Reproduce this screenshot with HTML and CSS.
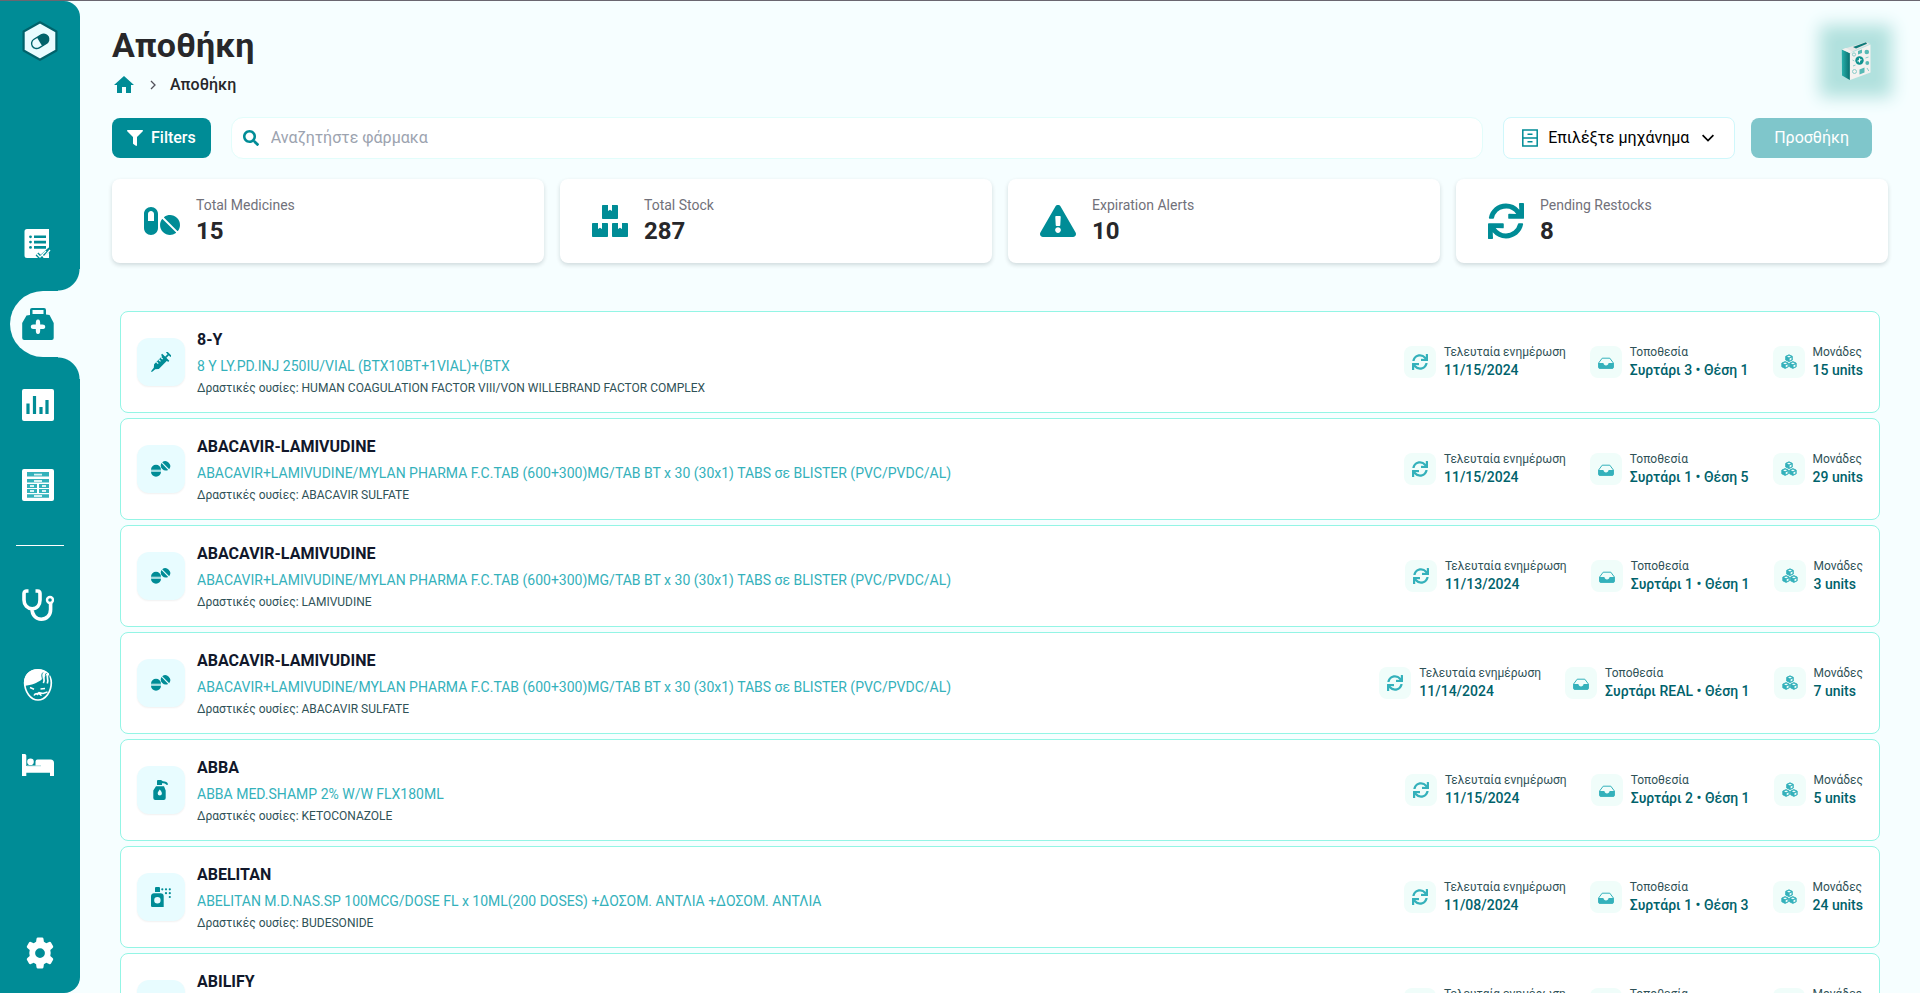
FILE: index.html
```html
<!DOCTYPE html>
<html lang="el">
<head>
<meta charset="utf-8">
<title>Αποθήκη</title>
<meta name="viewport" content="width=device-width, initial-scale=1">
<link rel="stylesheet" href="styles.css">
</head>
<body>
<svg class="sprite" aria-hidden="true">
  <symbol id="i-sync" viewBox="0 0 512 512"><path d="M440.65 12.57l4 82.77A247.16 247.16 0 0 0 255.83 8C134.73 8 33.91 94.92 12.29 209.82A12 12 0 0 0 24.09 224h49.05a12 12 0 0 0 11.67-9.26 175.91 175.91 0 0 1 317-56.94l-101.46-4.86a12 12 0 0 0-12.57 12v47.41a12 12 0 0 0 12 12H500a12 12 0 0 0 12-12V12a12 12 0 0 0-12-12h-47.37a12 12 0 0 0-11.98 12.57zM255.83 432a175.61 175.61 0 0 1-146-77.8l101.8 4.87a12 12 0 0 0 12.57-12v-47.4a12 12 0 0 0-12-12H12a12 12 0 0 0-12 12V500a12 12 0 0 0 12 12h47.35a12 12 0 0 0 12-12.6l-4.15-82.57A247.17 247.17 0 0 0 255.83 504c121.11 0 221.93-86.92 243.55-201.82a12 12 0 0 0-11.8-14.18h-49.05a12 12 0 0 0-11.67 9.26A175.86 175.86 0 0 1 255.83 432z"/></symbol>
  <symbol id="i-inbox" viewBox="0 0 16 16"><path d="M4.2 4.2h7.600L15.400 9v4.200a1 1 0 0 1-1 1H1.600a1 1 0 0 1-1-1V9z" fill="none" stroke="currentColor" stroke-width="1"/><path d="M.6 9h4.800c.2 1.400 1.200 2.400 2.600 2.400s2.400-1 2.600-2.400h4.800v4.500a1.200 1.200 0 0 1-1.200 1.200H1.800a1.200 1.200 0 0 1-1.200-1.200z"/></symbol>
  <symbol id="i-cubes" viewBox="0 0 16 16"><g stroke="currentColor" stroke-width=".9" stroke-linejoin="round"><path d="M8 .8l3.300 1.500v3.700L8 7.600 4.700 6V2.300zM4.100 7.600l3.300 1.500v3.700l-3.300 1.600-3.300-1.600V9.100zM11.900 7.600l3.300 1.500v3.700l-3.300 1.600-3.300-1.600V9.100z"/></g><g fill="#f0fdfa"><path d="M8 1.700l2 .9-2 .9-2-.9zM4.100 8.500l2 .9-2 .9-2-.9zM11.900 8.500l2 .9-2 .9-2-.9z"/><path d="M8.600 4.500l1.900-.9v2l-1.900.9zM4.700 11.300l1.900-.9v2l-1.900.9zM12.500 11.300l1.900-.9v2l-1.900.9z"/></g></symbol>
  <symbol id="i-tablets" viewBox="0 0 20 20"><path d="M0 10.800a5 5 0 0 1 10 0zM0 12.800a5 5 0 0 0 10 0z"/><path d="M0 11.300h10v1H0z" opacity=".4"/><path d="M11.200 3.200l7 7a5 5 0 0 0-7-7zM10.500 4l6.700 6.900a5 5 0 0 1-6.700-6.900z"/></symbol>
  <symbol id="i-syringe" viewBox="0 0 20 20"><path d="M0 20l.6-1.600 2.200-2.600.3-3.600L12 3.300l4.700 4.700-8.900 8.900-3.600.3L1.600 19.400z"/><path d="M10.600 2.300l7.100 7.100M14.200 5.800l3.600-3.600M15.600 0l4.400 4.400" fill="none" stroke="currentColor" stroke-width="1.700"/><path d="M5.500 10l1.700 1.700M7.800 7.700l1.700 1.700M10 5.500l1.700 1.700" stroke="#e8fcff" stroke-width="1.200"/></symbol>
  <symbol id="i-pump" viewBox="0 0 20 20"><path d="M6 5V1.200C6 .5 6.500 0 7.200 0h2.600c1 0 1.300.9 2.200 1.300 2.500.1 4.800.8 5.100 3.500h-2c-.3-1.500-2-1.600-4.100-1.600V5z"/><path fill-rule="evenodd" d="M5 6.200h8l1.700 4.300V18a2 2 0 0 1-2 2H4.300a2 2 0 0 1-2-2v-7.500zM8.700 9.500c-1.200 1.600-2 2.800-2 4a2.100 2.100 0 0 0 4.200 0c0-1.200-.9-2.500-2.200-4z"/></symbol>
  <symbol id="i-spray" viewBox="0 0 20 20"><path d="M4 5V1a1 1 0 0 1 1-1h3a1 1 0 0 1 1 1v4z"/><path fill-rule="evenodd" d="M3 6.300h6.600A3.200 3.200 0 0 1 12.700 9.500V20H1.200A1.200 1.200 0 0 1 0 18.800V9.500a3.200 3.200 0 0 1 3-3.200zM6.400 10a3.200 3.200 0 1 0 0 6.400 3.200 3.200 0 0 0 0-6.400z"/><g><circle cx="11.300" cy="2.300" r="1.100"/><circle cx="15" cy="2.300" r="1.100"/><circle cx="18.800" cy="2.300" r="1.100"/><circle cx="15" cy="6.200" r="1.100"/><circle cx="18.800" cy="6.200" r="1.100"/><circle cx="18.800" cy="10" r="1.100"/></g></symbol>
</svg>

<div class="app">
  <aside class="sidebar">
    <a class="logo" href="#" aria-label="Αρχική">
      <svg width="36" height="40" viewBox="0 0 36 40"><path d="M18 1.200l16.400 9.300v19L18 38.800 1.600 29.500v-19z" fill="#e9fcff" stroke="#00626b" stroke-width="2.200" stroke-linejoin="round"/><g transform="rotate(-31 18 20.500)"><rect x="9" y="15.500" width="18.400" height="10" rx="5" fill="#e9fcff" stroke="#00626b" stroke-width="1.400"/><path d="M17.500 15.500h5a5 5 0 0 1 0 10h-5z" fill="#00626b"/></g></svg>
    </a>
    <nav class="nav">
      <a class="nav-link" href="#" aria-label="Συνταγές"><svg width="32" height="32" viewBox="0 0 32 32"><path d="M5 0h22v29H5a2.500 2.500 0 0 1-2.500-2.500v-24A2.500 2.500 0 0 1 5 0z"/><g stroke="#008c96" stroke-width="2.600"><path d="M12 7.800h12M12 13.100h12M12 18.400h12"/></g><g fill="#008c96"><circle cx="8.500" cy="7.800" r="1.400"/><circle cx="8.500" cy="13.100" r="1.400"/><circle cx="8.500" cy="18.400" r="1.400"/></g><path d="M15 25l3.500 3.500L28 20" fill="none" stroke="#008c96" stroke-width="4"/><path d="M15 25l3 3 6-6M19.500 25.500l2.500 2.500 6-7" fill="none" stroke="#fff" stroke-width="1.300"/></svg></a>
      <a class="nav-link active" href="#" aria-label="Αποθήκη" aria-current="page"><svg width="32" height="32" viewBox="0 0 32 32"><path fill-rule="evenodd" d="M8 7V2a2 2 0 0 1 2-2h12a2 2 0 0 1 2 2v4.500l3.500.5L31.700 15v15a2 2 0 0 1-2 2h-27.500a2 2 0 0 1-2-2V15L4.500 7.500zM10.500 2v4h11V2z"/><path d="M16 11.500c2 0 2.200 1.500 2.200 5 3.500 0 5 .2 5 2.300s-1.500 2.300-5 2.300c0 3.400-.2 5-2.200 5s-2.200-1.600-2.200-5c-3.500 0-5-.2-5-2.300s1.500-2.300 5-2.300c0-3.500.2-5 2.200-5z" fill="#f6feff"/></svg></a>
      <a class="nav-link" href="#" aria-label="Στατιστικά"><svg width="32" height="32" viewBox="0 0 32 32"><rect width="32" height="32" rx="2"/><path d="M6 14.500V25M12.500 7v18M19 18v7M25 11v14" stroke="#008c96" stroke-width="3.200"/></svg></a>
      <a class="nav-link" href="#" aria-label="Συρτάρια"><svg width="32" height="32" viewBox="0 0 32 32"><rect width="32" height="32" rx="2"/><path d="M5 3h22v4.500H5zM5 10h22v3.500H5zM5 15h10v4H5zM17 15h10v4H17zM5 20h10v4H5zM17 20h10v4H17zM5 25.300h22v3.500H5z" fill="#34b2bb"/><path d="M12 5.600h8M12 12h8M8 17h4M20 17h4M8 22h4M20 22h4M12 27h8" stroke="#d9f3f5" stroke-width="1.800"/></svg></a>
      <hr class="nav-divider">
      <a class="nav-link" href="#" aria-label="Γιατροί"><svg width="32" height="32" viewBox="0 0 32 32"><path d="M6.500 2H4.800A2.600 2.600 0 0 0 2 4.600V11c0 5.200 3.500 8.700 8.200 8.700S18 16.200 18 11V4.600A2.600 2.600 0 0 0 15.500 2H13.500M10 20c0 6 4 10.200 9.300 10.200 5.400 0 9.300-4 9.300-9.700V14" fill="none" stroke="#fff" stroke-width="3.600"/><circle cx="28" cy="11" r="3" fill="none" stroke="#fff" stroke-width="2.400"/></svg></a>
      <a class="nav-link" href="#" aria-label="Ασθενείς"><svg width="32" height="32" viewBox="0 0 32 32"><path d="M16 .9c8 0 13.300 5.300 13.300 12.800C29.300 22.500 23.500 31 16 31S2.700 22.500 2.700 14C2.700 6.200 8 .9 16 .9z" fill="none" stroke="#fff" stroke-width="1.700"/><path d="M2 17C1 7 6.500.3 15.500.3c5 0 8.500 1.500 11 4.700C21 8 19 15 2 17z"/><g fill="none" stroke="#fff" stroke-width="1.500"><path d="M8 18.500l4 1.800M18.500 20l4.500-.5M12 26.500c1-2.500 5.500-2.800 7.500.2M15 26l2-2.500 4 1 4.500-1.500"/></g><path d="M21 3.500c-3 3 1 6-1.500 10M24.500 4c-3 3 1 6-1 10.500M28 5c-2.500 3 .5 6-1.500 10" fill="none" stroke="#008c96" stroke-width="1"/><path d="M22.800 4c-3 3 1 6-1.500 10M26.300 4c-3 3 1 6-1 10.500" fill="none" stroke="#fff" stroke-width="1.700"/></svg></a>
      <a class="nav-link" href="#" aria-label="Κλίνες"><svg width="32" height="32" viewBox="0 0 32 32"><path d="M0 5h2.800a1.500 1.500 0 0 1 1.500 1.500V17h9.200v-4.500a2 2 0 0 1 2-2h13A3.500 3.500 0 0 1 32 14v13h-4v-3.200H4.300V27H0z"/><circle cx="8.500" cy="12.800" r="3.300"/><path d="M5 16.800h14" stroke="#9fd6da" stroke-width=".9"/></svg></a>
    </nav>
    <a class="settings" href="#" aria-label="Ρυθμίσεις"><svg width="32" height="32" viewBox="0 0 32 32"><path fill-rule="evenodd" d="M12.500 1.800A1.500 1.500 0 0 1 14 .5h4a1.500 1.500 0 0 1 1.500 1.300l.4 3 2.400 1.400 2.800-1.200a1.500 1.500 0 0 1 1.900.6l2 3.500a1.500 1.500 0 0 1-.4 2l-2.300 1.800a12 12 0 0 1 0 6.200l2.300 1.800a1.500 1.500 0 0 1 .4 2l-2 3.500a1.500 1.500 0 0 1-1.900.6l-2.800-1.200-2.400 1.400-.4 3a1.500 1.500 0 0 1-1.500 1.300h-4a1.500 1.500 0 0 1-1.500-1.300l-.4-3-2.400-1.400L6.900 27a1.500 1.500 0 0 1-1.900-.6l-2-3.500a1.500 1.500 0 0 1 .4-2l2.300-1.800a12 12 0 0 1 0-6.200L3.400 11.100a1.500 1.500 0 0 1-.4-2l2-3.500A1.500 1.500 0 0 1 6.900 5l2.800 1.200 2.400-1.400zM16 11.200a4.900 4.900 0 1 0 0 9.800 4.900 4.900 0 0 0 0-9.800z"/></svg></a>
  </aside>

  <main class="main">
    <header class="header">
      <div>
        <h1 class="title">Αποθήκη</h1>
        <nav class="breadcrumb" aria-label="breadcrumb">
          <a href="#" aria-label="Αρχική"><svg width="24" height="24" viewBox="0 0 24 24"><path d="M10 20v-6h4v6h5v-8h3L12 3 2 12h3v8z"/></svg></a>
          <svg class="crumb-sep" width="16" height="16" viewBox="0 0 16 16"><path d="M6 4l4 4-4 4"/></svg>
          <span>Αποθήκη</span>
        </nav>
      </div>
      <button class="book" aria-label="Οδηγός φαρμάκων">
        <svg width="30" height="38" viewBox="0 0 30 38"><defs><linearGradient id="spine"><stop offset="0" stop-color="#27b0ab"/><stop offset="1" stop-color="#08706f"/></linearGradient></defs><path d="M1 7.500L25 0l4 2-19 8z" fill="#e6e6e6"/><path d="M12 5L25 .2l1 1.600L15 6.500z" fill="#0d7a78"/><path d="M.8 7.500l8 3.500v27L1 33.500z" fill="url(#spine)"/><path d="M1 7.500l8 3.700 3-1.200-7-4z" fill="#f2f0ee"/><path d="M9 11.500L29.500 2.500v28L9 38z" fill="#f4f2f0"/><circle cx="18.500" cy="18.500" r="4.200" fill="#11928f"/><path d="M16.500 19.200l4-1.600M18.500 16.300v4.300" stroke="#fff" stroke-width="1.100"/><g fill="#58b9b5"><path d="M17 9l4-1.500v3.500l-4 1.500zM18.500 27.500l5-2v5l-5 2z"/><circle cx="25.800" cy="10" r="2.300"/><circle cx="26.300" cy="21" r="1.900"/></g><g fill="none" stroke="#7fc8c5" stroke-width=".9"><circle cx="13" cy="12.500" r="1.600"/><path d="M11.500 18l1.800 1M12 24l2.500-1M24.500 16l3-1M26 26l1.800 3"/><circle cx="13.500" cy="29.500" r="2"/></g></svg>
      </button>
    </header>

    <div class="toolbar">
      <button class="btn"><svg width="16" height="16" viewBox="0 0 512 512"><path d="M487.976 0H24.028C2.710 0-8.047 25.866 7.058 40.971L192 225.941V432c0 7.831 3.821 15.170 10.237 19.662l80 55.980C298.020 518.690 320 507.493 320 487.980V225.941l184.947-184.970C520.021 25.896 509.338 0 487.976 0z"/></svg>Filters</button>
      <label class="search">
        <svg width="16" height="16" viewBox="0 0 512 512"><path d="M505 442.700L405.300 343c-4.500-4.500-10.600-7-17-7H372c27.600-35.300 44-79.700 44-128C416 93.100 322.900 0 208 0S0 93.100 0 208s93.100 208 208 208c48.300 0 92.700-16.400 128-44v16.300c0 6.400 2.500 12.500 7 17l99.700 99.700c9.400 9.400 24.600 9.400 33.900 0l28.300-28.300c9.400-9.400 9.400-24.600.1-34zM208 336c-70.700 0-128-57.200-128-128 0-70.700 57.200-128 128-128 70.700 0 128 57.200 128 128 0 70.700-57.200 128-128 128z"/></svg>
        <input type="search" placeholder="Αναζητήστε φάρμακα" aria-label="Αναζητήστε φάρμακα">
      </label>
      <label class="picker">
        <svg class="outline" width="16" height="18" viewBox="0 0 16 18" stroke="#008c96" stroke-width="1.500"><rect x=".8" y="1" width="14.400" height="16"/><path d="M1 9h14M5.500 5.200h5M5.500 12.800h5"/></svg>
        <select aria-label="Μηχάνημα"><option>Επιλέξτε μηχάνημα</option></select>
        <svg class="outline" width="12" height="12" viewBox="0 0 12 12" stroke="#000" stroke-width="1.700"><path d="M.6 3.200L6 8.600l5.400-5.400"/></svg>
      </label>
      <button class="btn btn-add" disabled>Προσθήκη</button>
    </div>

    <section class="stats">
      <div class="stat"><svg width="36" height="32" viewBox="0 0 576 512"><path d="M112 32C50.100 32 0 82.100 0 144v224c0 61.900 50.100 112 112 112s112-50.100 112-112V144c0-61.900-50.100-112-112-112zm48 224H64V144c0-26.500 21.500-48 48-48s48 21.500 48 48v112zm139.700-29.700c-3.500-3.500-9.400-3.100-12.300.8-45.300 62.500-40.400 150.100 15.900 206.400 56.300 56.300 143.900 61.200 206.400 15.900 4-2.900 4.300-8.800.8-12.300L299.700 226.300zm229.800-19c-56.300-56.300-143.900-61.200-206.400-15.900-4 2.900-4.300 8.800-.8 12.300l210.800 210.800c3.500 3.500 9.400 3.100 12.300-.8 45.300-62.600 40.500-150.100-15.900-206.400z"/></svg><div><p>Total Medicines</p><strong>15</strong></div></div>
      <div class="stat"><svg width="36" height="32" viewBox="0 0 576 512"><path d="M560 288h-80v96l-32-21.300-32 21.300v-96h-80c-8.800 0-16 7.200-16 16v192c0 8.800 7.200 16 16 16h224c8.800 0 16-7.200 16-16V304c0-8.800-7.200-16-16-16zm-384-64h224c8.800 0 16-7.200 16-16V16c0-8.800-7.200-16-16-16h-80v96l-32-21.300L256 96V0h-80c-8.800 0-16 7.200-16 16v192c0 8.800 7.200 16 16 16zm64 64h-80v96l-32-21.300L96 384v-96H16c-8.800 0-16 7.200-16 16v192c0 8.800 7.200 16 16 16h224c8.800 0 16-7.200 16-16V304c0-8.800-7.200-16-16-16z"/></svg><div><p>Total Stock</p><strong>287</strong></div></div>
      <div class="stat"><svg width="36" height="32" viewBox="0 0 576 512"><path d="M569.517 440.013C587.975 472.007 564.806 512 527.940 512H48.054c-36.937 0-59.999-40.055-41.577-71.987L246.423 23.985c18.467-32.009 64.720-31.951 83.154 0l239.940 416.028zM288 354c-25.405 0-46 20.595-46 46s20.595 46 46 46 46-20.595 46-46-20.595-46-46-46zm-43.673-165.346l7.418 136c.347 6.364 5.609 11.346 11.982 11.346h48.546c6.373 0 11.635-4.982 11.982-11.346l7.418-136c.375-6.874-5.098-12.654-11.982-12.654h-63.383c-6.884 0-12.356 5.780-11.981 12.654z"/></svg><div><p>Expiration Alerts</p><strong>10</strong></div></div>
      <div class="stat"><svg width="36" height="36"><use href="#i-sync"/></svg><div><p>Pending Restocks</p><strong>8</strong></div></div>
    </section>

    <ul class="list">
      <li class="med">
        <span class="tile"><svg width="20" height="20"><use href="#i-syringe"/></svg></span>
        <div class="info"><h2>8-Y</h2><p class="brand">8 Y LY.PD.INJ 250IU/VIAL (BTX10BT+1VIAL)+(BTX</p><p class="substance">Δραστικές ουσίες: HUMAN COAGULATION FACTOR VIII/VON WILLEBRAND FACTOR COMPLEX</p></div>
        <dl class="facts">
          <div><svg class="chip"><use href="#i-sync"/></svg><dt>Τελευταία ενημέρωση</dt><dd>11/15/2024</dd></div>
          <div><svg class="chip"><use href="#i-inbox"/></svg><dt>Τοποθεσία</dt><dd>Συρτάρι 3 • Θέση 1</dd></div>
          <div><svg class="chip"><use href="#i-cubes"/></svg><dt>Μονάδες</dt><dd>15 units</dd></div>
        </dl>
      </li>
      <li class="med">
        <span class="tile"><svg width="20" height="20"><use href="#i-tablets"/></svg></span>
        <div class="info"><h2>ABACAVIR-LAMIVUDINE</h2><p class="brand">ABACAVIR+LAMIVUDINE/MYLAN PHARMA F.C.TAB (600+300)MG/TAB BT x 30 (30x1) TABS σε BLISTER (PVC/PVDC/AL)</p><p class="substance">Δραστικές ουσίες: ABACAVIR SULFATE</p></div>
        <dl class="facts">
          <div><svg class="chip"><use href="#i-sync"/></svg><dt>Τελευταία ενημέρωση</dt><dd>11/15/2024</dd></div>
          <div><svg class="chip"><use href="#i-inbox"/></svg><dt>Τοποθεσία</dt><dd>Συρτάρι 1 • Θέση 5</dd></div>
          <div><svg class="chip"><use href="#i-cubes"/></svg><dt>Μονάδες</dt><dd>29 units</dd></div>
        </dl>
      </li>
      <li class="med">
        <span class="tile"><svg width="20" height="20"><use href="#i-tablets"/></svg></span>
        <div class="info"><h2>ABACAVIR-LAMIVUDINE</h2><p class="brand">ABACAVIR+LAMIVUDINE/MYLAN PHARMA F.C.TAB (600+300)MG/TAB BT x 30 (30x1) TABS σε BLISTER (PVC/PVDC/AL)</p><p class="substance">Δραστικές ουσίες: LAMIVUDINE</p></div>
        <dl class="facts">
          <div><svg class="chip"><use href="#i-sync"/></svg><dt>Τελευταία ενημέρωση</dt><dd>11/13/2024</dd></div>
          <div><svg class="chip"><use href="#i-inbox"/></svg><dt>Τοποθεσία</dt><dd>Συρτάρι 1 • Θέση 1</dd></div>
          <div><svg class="chip"><use href="#i-cubes"/></svg><dt>Μονάδες</dt><dd>3 units</dd></div>
        </dl>
      </li>
      <li class="med">
        <span class="tile"><svg width="20" height="20"><use href="#i-tablets"/></svg></span>
        <div class="info"><h2>ABACAVIR-LAMIVUDINE</h2><p class="brand">ABACAVIR+LAMIVUDINE/MYLAN PHARMA F.C.TAB (600+300)MG/TAB BT x 30 (30x1) TABS σε BLISTER (PVC/PVDC/AL)</p><p class="substance">Δραστικές ουσίες: ABACAVIR SULFATE</p></div>
        <dl class="facts">
          <div><svg class="chip"><use href="#i-sync"/></svg><dt>Τελευταία ενημέρωση</dt><dd>11/14/2024</dd></div>
          <div><svg class="chip"><use href="#i-inbox"/></svg><dt>Τοποθεσία</dt><dd>Συρτάρι REAL • Θέση 1</dd></div>
          <div><svg class="chip"><use href="#i-cubes"/></svg><dt>Μονάδες</dt><dd>7 units</dd></div>
        </dl>
      </li>
      <li class="med">
        <span class="tile"><svg width="20" height="20"><use href="#i-pump"/></svg></span>
        <div class="info"><h2>ABBA</h2><p class="brand">ABBA MED.SHAMP 2% W/W FLX180ML</p><p class="substance">Δραστικές ουσίες: KETOCONAZOLE</p></div>
        <dl class="facts">
          <div><svg class="chip"><use href="#i-sync"/></svg><dt>Τελευταία ενημέρωση</dt><dd>11/15/2024</dd></div>
          <div><svg class="chip"><use href="#i-inbox"/></svg><dt>Τοποθεσία</dt><dd>Συρτάρι 2 • Θέση 1</dd></div>
          <div><svg class="chip"><use href="#i-cubes"/></svg><dt>Μονάδες</dt><dd>5 units</dd></div>
        </dl>
      </li>
      <li class="med">
        <span class="tile"><svg width="20" height="20"><use href="#i-spray"/></svg></span>
        <div class="info"><h2>ABELITAN</h2><p class="brand">ABELITAN M.D.NAS.SP 100MCG/DOSE FL x 10ML(200 DOSES) +ΔΟΣΟΜ. ΑΝΤΛΙΑ +ΔΟΣΟΜ. ΑΝΤΛΙΑ</p><p class="substance">Δραστικές ουσίες: BUDESONIDE</p></div>
        <dl class="facts">
          <div><svg class="chip"><use href="#i-sync"/></svg><dt>Τελευταία ενημέρωση</dt><dd>11/08/2024</dd></div>
          <div><svg class="chip"><use href="#i-inbox"/></svg><dt>Τοποθεσία</dt><dd>Συρτάρι 1 • Θέση 3</dd></div>
          <div><svg class="chip"><use href="#i-cubes"/></svg><dt>Μονάδες</dt><dd>24 units</dd></div>
        </dl>
      </li>
      <li class="med">
        <span class="tile"><svg width="20" height="20"><use href="#i-tablets"/></svg></span>
        <div class="info"><h2>ABILIFY</h2><p class="brand">ABILIFY TAB 10MG/TAB</p><p class="substance">Δραστικές ουσίες: ARIPIPRAZOLE</p></div>
        <dl class="facts">
          <div><svg class="chip"><use href="#i-sync"/></svg><dt>Τελευταία ενημέρωση</dt><dd>11/15/2024</dd></div>
          <div><svg class="chip"><use href="#i-inbox"/></svg><dt>Τοποθεσία</dt><dd>Συρτάρι 1 • Θέση 2</dd></div>
          <div><svg class="chip"><use href="#i-cubes"/></svg><dt>Μονάδες</dt><dd>10 units</dd></div>
        </dl>
      </li>
    </ul>
  </main>
</div>
</body>
</html>
```

FILE: styles.css
```css
:root {
  --teal: #008c96;
  --page: #f6feff;
}

* { box-sizing: border-box; }

body, h1, h2, p, ul, dl, dd, hr { margin: 0; padding: 0; }

body {
  background: var(--page);
  color: #27272a;
  font-family: Roboto, "Noto Sans", sans-serif;
  font-size: 16px;
  line-height: 24px;
}

button, input, select { font: inherit; }
svg { display: block; flex: none; fill: currentColor; }
svg.outline { fill: none; }
.sprite { display: none; }

.app {
  display: flex;
  height: 100vh;
  border-top: 1px solid #6a6670;
  overflow: hidden;
}

/* Sidebar */
.sidebar {
  display: flex;
  flex-direction: column;
  align-items: center;
  flex: none;
  width: 80px;
  padding: 20px 0 24px;
  border-radius: 0 16px 16px 0;
  background: var(--teal);
  color: #fff;
}
.logo { margin-bottom: 144px; }
.nav { width: 100%; }
.nav-link {
  display: flex;
  align-items: center;
  height: 80px;
  padding-left: 22px;
  color: #fff;
}
.nav-link.active {
  position: relative;
  height: 66px;
  margin: 6px 0 8px 10px;
  padding-left: 12px;
  border-radius: 33px 0 0 33px;
  background: var(--page);
  color: var(--teal);
}
.nav-link.active::before,
.nav-link.active::after {
  content: "";
  position: absolute;
  right: 0;
  width: 22px;
  height: 22px;
}
.nav-link.active::before {
  bottom: 100%;
  background: radial-gradient(circle at 0 0, transparent 21px, var(--page) 22px);
}
.nav-link.active::after {
  top: 100%;
  background: radial-gradient(circle at 0 100%, transparent 21px, var(--page) 22px);
}
.nav-divider {
  width: 48px;
  margin: 20px auto 19px;
  border: 0;
  border-top: 1px solid #fff;
}
.settings { margin-top: auto; color: #fff; }

/* Main column */
.main {
  flex: 1;
  min-width: 0;
  padding: 24px 32px;
  overflow-y: auto;
  scrollbar-width: none;
}
.header { display: flex; justify-content: space-between; }
.title { font-size: 34px; line-height: 40px; font-weight: 700; }
.breadcrumb {
  display: flex;
  align-items: center;
  gap: 9px;
  margin-top: 8px;
  font-weight: 500;
}
.breadcrumb a { color: var(--teal); }
.crumb-sep { fill: none; stroke: #52525b; stroke-width: 1.300; }
.book {
  display: grid;
  place-items: center;
  width: 40px;
  height: 40px;
  margin: 16px 12px 0 0;
  padding: 0;
  border: 0;
  background: #b1e1de;
  box-shadow: 0 0 16px 16px #b1e1de;
}

.toolbar {
  display: flex;
  align-items: center;
  margin: 20px 16px 20px 0;
}
.btn {
  display: flex;
  align-items: center;
  gap: 8px;
  height: 40px;
  padding: 0 15px;
  border: 0;
  border-radius: 8px;
  background: var(--teal);
  color: #fff;
  font-weight: 500;
}
.btn-add { padding: 0 23px; background: #7fc6cb; font-weight: 400; }
.search {
  display: flex;
  align-items: center;
  gap: 12px;
  flex: 1;
  height: 42px;
  margin: 0 20px;
  padding: 0 11px;
  border: 1px solid #e2fdfb;
  border-radius: 12px;
  background: #fff;
  color: var(--teal);
}
.search input {
  flex: 1;
  min-width: 0;
  padding: 0;
  border: 0;
  outline: 0;
  background: none;
}
.search input::placeholder { color: #9ca3af; opacity: 1; }
.picker {
  display: flex;
  align-items: center;
  height: 42px;
  margin-right: 16px;
  padding: 0 20px 0 18px;
  border: 1px solid #cff7fb;
  border-radius: 8px;
  background: #fff;
}
.picker select {
  appearance: none;
  margin: 0 12px 0 10px;
  padding: 0;
  border: 0;
  background: none;
  color: #000;
}

.stats {
  display: grid;
  grid-template-columns: repeat(4, 1fr);
  gap: 16px;
}
.stat {
  display: flex;
  align-items: center;
  gap: 16px;
  padding: 16px 32px;
  border-radius: 8px;
  background: #fff;
  box-shadow: 0 2px 4px rgba(0, 30, 35, .16);
  color: var(--teal);
}
.stat p { color: #71717a; font-size: 14px; line-height: 20px; }
.stat strong { display: block; color: #27272a; font-size: 24px; line-height: 32px; }

/* Medicine list */
.list {
  display: grid;
  gap: 5px;
  margin-top: 48px;
  padding: 0 8px;
  list-style: none;
}
.med {
  display: flex;
  align-items: center;
  gap: 12px;
  padding: 16px;
  border: 1px solid #93f5e5;
  border-radius: 8px;
  background: #fff;
}
.tile {
  display: grid;
  place-items: center;
  flex: none;
  width: 48px;
  height: 48px;
  border-radius: 12px;
  background: #e8fcff;
  box-shadow: 0 1px 2px rgba(0, 0, 0, .06);
  color: var(--teal);
}
.info { display: grid; gap: 4px; flex: 1; min-width: 0; }
.info h2 { color: #11182b; font-size: 16px; line-height: 24px; font-weight: 700; }
.brand { color: #34b1bb; font-size: 14px; line-height: 20px; }
.substance { color: #2f5257; font-size: 12px; line-height: 16px; }
.facts { display: flex; gap: 24px; }
.facts > div {
  display: grid;
  grid-template-columns: 32px auto;
  column-gap: 8px;
}
.chip {
  grid-row: 1 / 3;
  align-self: center;
  width: 32px;
  height: 32px;
  padding: 8px;
  border-radius: 8px;
  background: #f0fdfa;
  color: #34b1bb;
}
.facts dt { color: #2f5257; font-size: 12px; line-height: 16px; }
.facts dd { color: #00626b; font-size: 14px; line-height: 20px; font-weight: 500; }
```
